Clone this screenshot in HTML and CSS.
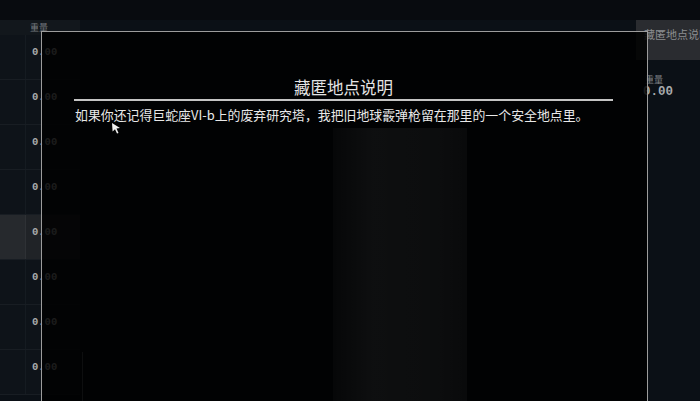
FILE: index.html
```html
<!DOCTYPE html>
<html lang="zh-CN">
<head>
    <meta charset="UTF-8">
    <meta name="viewport" content="width=device-width, initial-scale=1.0">
    <title>藏匿地点说明</title>
    <link rel="stylesheet" href="styles.css">
</head>
<body>
    <div class="topbar"></div>

    <div class="main">
        <!-- inventory list behind the dialog -->
        <div class="list">
            <div class="list-head"><span>重量</span></div>
            <div class="row"><div class="cell"></div><div class="cell weight">0.00</div></div>
            <div class="row"><div class="cell"></div><div class="cell weight">0.00</div></div>
            <div class="row"><div class="cell"></div><div class="cell weight">0.00</div></div>
            <div class="row"><div class="cell"></div><div class="cell weight">0.00</div></div>
            <div class="row active"><div class="cell"></div><div class="cell weight">0.00</div></div>
            <div class="row"><div class="cell"></div><div class="cell weight">0.00</div></div>
            <div class="row"><div class="cell"></div><div class="cell weight">0.00</div></div>
            <div class="row"><div class="cell"></div><div class="cell weight">0.00</div></div>
        </div>

        <div class="spacer"></div>

        <!-- item detail column -->
        <div class="side">
            <div class="side-title">藏匿地点说明</div>
            <div class="side-label">重量</div>
            <div class="side-value">0.00</div>
        </div>
    </div>

    <div class="dialog">
        <div class="glow"></div>
        <div class="seam"></div>
        <h2 class="dialog-title">藏匿地点说明</h2>
        <p class="dialog-text">如果你还记得巨蛇座VI-b上的废弃研究塔，我把旧地球霰弹枪留在那里的一个安全地点里。</p>
    </div>

    <svg class="cursor" width="9" height="11" viewBox="0 0 9 11">
        <path d="M0 0 L8 5 L4.5 5.6 L6.5 10 L5 10.6 L3 6.3 L0.6 8.4 Z" fill="#f2f2f2"/>
    </svg>
</body>
</html>
```

FILE: styles.css
```css
body {
    margin: 0;
    width: 700px;
    height: 401px;
    overflow: hidden;
    background-color: #0b1016;
    font-family: "Noto Sans CJK SC", "Noto Sans", sans-serif;
    position: relative;
}
.topbar {
    height: 20px;
    background-color: #080b0f;
}
.main {
    display: flex;
}

/* list */
.list {
    width: 80px;
}
.list-head {
    height: 15px;
    background-color: #12171c;
    padding-left: 30px;
    box-sizing: border-box;
}
.list-head span {
    display: block;
    font-size: 9px;
    line-height: 15px;
    color: #777b80;
}
.row {
    display: grid;
    grid-template-columns: 25px 55px;
    height: 45px;
    border-bottom: 1px solid #181d23;
    box-sizing: border-box;
}
.cell {
    background-color: #0e1319;
}
.cell.weight {
    border-left: 1px solid #151b21;
    padding: 12px 0 0 6px;
    font-family: "Liberation Mono", monospace;
    font-size: 10.5px;
    line-height: 11px;
    color: #a9abad;
    font-weight: bold;
}
.row.active .cell {
    background-color: #26292d;
}
.row.active .cell.weight {
    background-color: #202327;
    border-left-color: #2e3135;
}

.spacer {
    flex: 1;
}

/* detail column */
.side {
    width: 64px;
    overflow: hidden;
    white-space: nowrap;
}
.side-title {
    height: 40px;
    background-color: #2a2c30;
    padding: 6px 0 0 8px;
    box-sizing: border-box;
    font-size: 11px;
    color: #8c8e91;
}
.side-label {
    margin-top: 15px;
    padding-left: 9px;
    font-size: 9px;
    line-height: 10px;
    color: #808387;
}
.side-value {
    padding-left: 7px;
    font-family: "Liberation Mono", monospace;
    font-weight: bold;
    font-size: 12.5px;
    line-height: 14px;
    color: #a8aaad;
}

/* dialog, slightly see-through */
.dialog {
    position: absolute;
    left: 41px;
    top: 31px;
    width: 607px;
    height: 400px;
    box-sizing: border-box;
    border: 1px solid #9c9c9c;
    background-color: rgba(0, 0, 0, 0.84);
    padding: 44px 34px 0 32px;
}
.glow {
    position: absolute;
    left: 291px;
    top: 96px;
    width: 134px;
    bottom: 0;
    background: linear-gradient(to right, rgba(255,255,255,0.02), rgba(255,255,255,0.05) 30%, rgba(255,255,255,0.045) 80%, rgba(255,255,255,0.03));
}
.seam {
    position: absolute;
    left: 40px;
    top: 320px;
    width: 1px;
    bottom: 0;
    background-color: rgba(255,255,255,0.05);
}
.dialog-title {
    position: relative;
    margin: 0;
    font-size: 16.5px;
    font-weight: normal;
    line-height: 23px;
    text-align: center;
    color: #e4e4e4;
    border-bottom: 2px solid #c4c4c4;
}
.dialog-text {
    position: relative;
    margin: 5px 0 0 1px;
    font-size: 12.9px;
    line-height: 17px;
    color: #e8e8e8;
    white-space: nowrap;
}
.cursor {
    position: absolute;
    left: 112px;
    top: 123px;
}
```
